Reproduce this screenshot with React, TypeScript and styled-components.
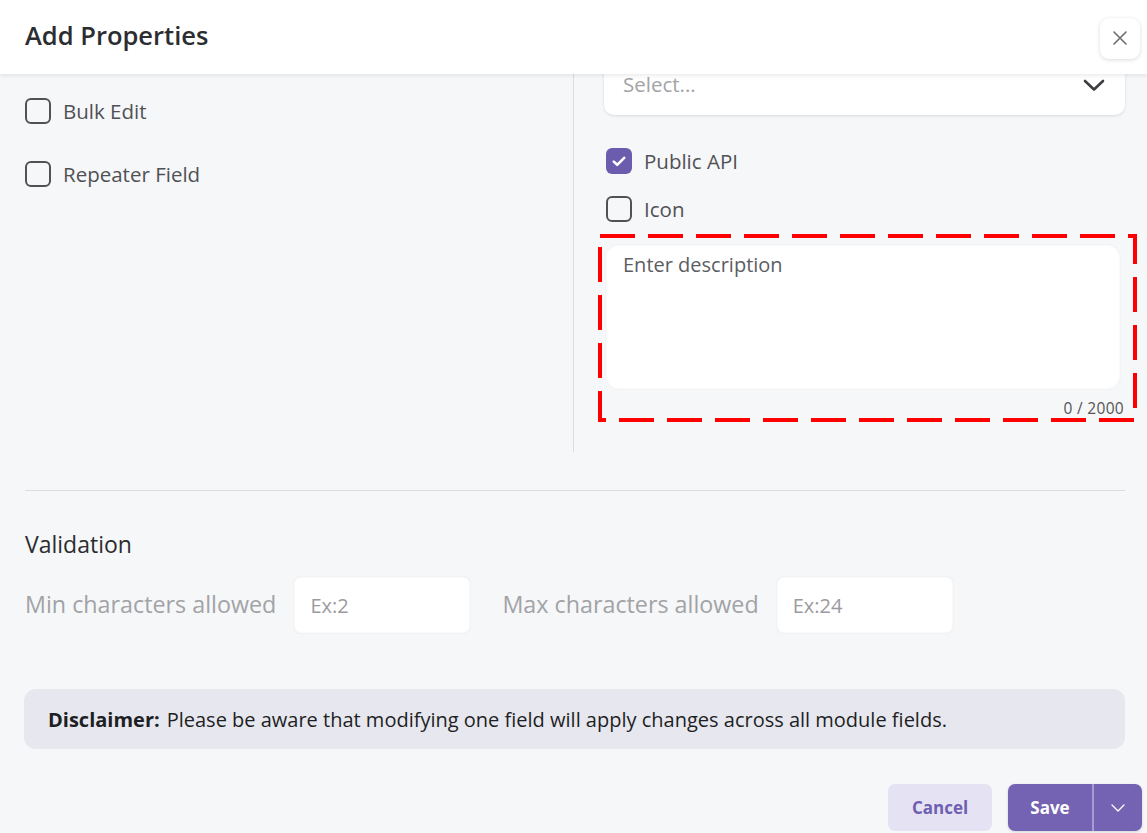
import React from "react";
import styled, { createGlobalStyle } from "styled-components";

const Global = createGlobalStyle`
  html, body { margin: 0; padding: 0; background: #f6f7f9; }
  body { font-family: "Open Sans", "Noto Sans", sans-serif; overflow: hidden; }
  * { box-sizing: border-box; }
`;

const Page = styled.div`
  width: 1147px;
  height: 833px;
  display: flex;
  flex-direction: column;
  background: #f6f7f9;
  overflow: hidden;
`;

const Header = styled.header`
  position: relative;
  z-index: 2;
  height: 74px;
  flex: none;
  background: #fff;
  box-shadow: 0 2px 4px rgba(0, 0, 0, 0.08);
  display: flex;
  align-items: center;
  justify-content: space-between;
  padding: 0 7px 4px 25px;
`;

const Title = styled.h1`
  margin: 0;
  font-size: 25.5px;
  font-weight: 600;
  color: #2b2d30;
`;

const CloseButton = styled.button`
  width: 40px;
  height: 41px;
  border: none;
  border-radius: 9px;
  background: #fff;
  box-shadow: 0 1px 4px rgba(0, 0, 0, 0.14);
  display: flex;
  align-items: center;
  justify-content: center;
  margin-top: 6px;
  padding: 0;
`;

const Body = styled.main`
  flex: 1;
  display: flex;
  flex-direction: column;
  padding: 0 22px 0 25px;
`;

const TopGrid = styled.section`
  flex: none;
  display: grid;
  grid-template-columns: 549px 1fr;
  border-bottom: 1px solid #dcdde0;
  padding-bottom: 38px;
`;

const LeftCol = styled.div`
  display: flex;
  flex-direction: column;
  gap: 37px;
  padding-top: 24px;
  border-right: 1px solid #dcdde0;
`;

const RightCol = styled.div`
  display: flex;
  flex-direction: column;
  padding-left: 30px;
  padding-bottom: 30px;
  margin-top: -19px;
  & > * { flex: none; }
`;

const SelectBox = styled.div`
  height: 60px;
  background: #fff;
  border-radius: 10px;
  box-shadow: 0 1px 3px rgba(0, 0, 0, 0.12);
  display: flex;
  align-items: center;
  justify-content: space-between;
  padding: 0 20px 0 19px;
  font-size: 20.5px;
  color: #a3a3a6;
  margin-bottom: 33px;
  span { margin-top: -2px; }
`;

const CheckRow = styled.label`
  display: flex;
  align-items: center;
  gap: 12px;
  height: 26px;
  font-size: 20.5px;
  font-weight: 500;
  color: #505154;
`;

const RightChecks = styled.div`
  display: flex;
  flex-direction: column;
  gap: 22px;
  margin-left: 2px;
`;

const Box = styled.span<{ $checked?: boolean }>`
  width: 26px;
  height: 26px;
  flex: none;
  border-radius: 6px;
  border: ${(p) => (p.$checked ? "none" : "2.5px solid #515256")};
  background: ${(p) => (p.$checked ? "#6c5cae" : "transparent")};
  display: flex;
  align-items: center;
  justify-content: center;
`;

const Highlight = styled.div`
  position: relative;
  margin: 12px -13px 0 -6px;
  padding: 10px 17px 0 7px;
  height: 188px;
  display: flex;
  flex-direction: column;
  & > * { flex: none; }
`;

const Dashes = styled.svg`
  position: absolute;
  inset: 0;
  width: 100%;
  height: 100%;
  pointer-events: none;
`;

const TextArea = styled.div`
  height: 146px;
  background: #fff;
  border-radius: 14px;
  box-shadow: inset 0 0 3px rgba(0, 0, 0, 0.12);
  padding: 7px 18px;
  font-size: 20px;
  color: #5c5d61;
`;

const Counter = styled.div`
  text-align: right;
  font-size: 15.5px;
  line-height: 20px;
  color: #555;
  margin-top: 8px;
  margin-right: -3px;
  letter-spacing: 0.3px;
`;

const SectionTitle = styled.h2`
  margin: 39px 0 0;
  font-size: 23px;
  line-height: 28px;
  font-weight: 500;
  color: #2b2c2f;
`;

const ValidationRow = styled.div`
  display: flex;
  align-items: center;
  margin-top: 18px;
`;

const FieldLabel = styled.span`
  font-size: 23.3px;
  font-weight: 500;
  color: #a2a3a6;
  margin-right: 17px;
  margin-top: -2px;
`;

const NumInput = styled.div`
  flex: none;
  width: 178px;
  height: 58px;
  background: #fff;
  border-radius: 8px;
  box-shadow: inset 0 0 3px rgba(0, 0, 0, 0.14);
  display: flex;
  align-items: center;
  padding-left: 17px;
  font-size: 20px;
  color: #9a9b9e;
  margin-right: 31px;
`;

const Disclaimer = styled.div`
  flex: none;
  margin: 55px 0 0 -1px;
  height: 60px;
  background: #e7e7f0;
  border-radius: 12px;
  display: flex;
  align-items: center;
  padding-left: 24px;
  font-size: 20px;
  color: #1e1f22;
  strong { font-weight: 700; margin-right: 7px; }
`;

const Footer = styled.footer`
  flex: none;
  display: flex;
  justify-content: flex-end;
  gap: 16px;
  margin: 35px -17px 0 0;
`;

const CancelButton = styled.button`
  width: 104px;
  height: 47px;
  border: none;
  border-radius: 7px;
  background: #e5e2f4;
  color: #6e5fb0;
  font-family: inherit;
  font-size: 17px;
  font-weight: 700;
`;

const SplitButton = styled.div`
  display: flex;
  height: 47px;
  border-radius: 7px;
  overflow: hidden;
  background: #7463b3;
  box-shadow: 0 1px 3px rgba(0, 0, 0, 0.15);
`;

const SaveButton = styled.button`
  width: 86px;
  border: none;
  background: transparent;
  color: #fff;
  font-family: inherit;
  font-size: 17px;
  font-weight: 700;
  border-right: 2px solid #a79bd6;
`;

const CaretButton = styled.button`
  width: 48px;
  border: none;
  background: transparent;
  display: flex;
  align-items: center;
  justify-content: center;
`;

const Check = ({ checked, label }: { checked?: boolean; label: string }) => (
  <CheckRow>
    <Box $checked={checked}>
      {checked && (
        <svg width="14" height="11" viewBox="0 0 14 11">
          <path d="M1.8 5.6 L5.2 8.8 L12.2 1.8" fill="none" stroke="#fff" strokeWidth="2.6" strokeLinecap="round" strokeLinejoin="round" />
        </svg>
      )}
    </Box>
    {label}
  </CheckRow>
);

export default function App() {
  return (
    <Page>
      <Global />
      <Header>
        <Title>Add Properties</Title>
        <CloseButton aria-label="Close">
          <svg width="16" height="16" viewBox="0 0 16 16">
            <path d="M2 2 L14 14 M14 2 L2 14" stroke="#6b6c70" strokeWidth="1.6" strokeLinecap="round" />
          </svg>
        </CloseButton>
      </Header>
      <Body>
        <TopGrid>
          <LeftCol>
            <Check label="Bulk Edit" />
            <Check label="Repeater Field" />
          </LeftCol>
          <RightCol>
            <SelectBox>
              <span>Select...</span>
              <svg width="22" height="13" viewBox="0 0 22 13">
                <path d="M2 2 L11 10.5 L20 2" fill="none" stroke="#3c3d41" strokeWidth="2.6" strokeLinecap="round" strokeLinejoin="round" />
              </svg>
            </SelectBox>
            <RightChecks>
              <Check checked label="Public API" />
              <Check label="Icon" />
            </RightChecks>
            <Highlight>
              <Dashes preserveAspectRatio="none">
                <rect x="2" y="2" width="535" height="184" fill="none" stroke="#ff0000" strokeWidth="4" strokeDasharray="35 13" />
              </Dashes>
              <TextArea>Enter description</TextArea>
              <Counter>0 / 2000</Counter>
            </Highlight>
          </RightCol>
        </TopGrid>
        <SectionTitle>Validation</SectionTitle>
        <ValidationRow>
          <FieldLabel>Min characters allowed</FieldLabel>
          <NumInput>Ex:2</NumInput>
          <FieldLabel>Max characters allowed</FieldLabel>
          <NumInput>Ex:24</NumInput>
        </ValidationRow>
        <Disclaimer>
          <strong>Disclaimer:</strong>
          Please be aware that modifying one field will apply changes across all module fields.
        </Disclaimer>
        <Footer>
          <CancelButton>Cancel</CancelButton>
          <SplitButton>
            <SaveButton>Save</SaveButton>
            <CaretButton aria-label="More">
              <svg width="14" height="8" viewBox="0 0 14 8">
                <path d="M1 1 L7 7 L13 1" fill="none" stroke="#fff" strokeWidth="1.3" strokeLinecap="round" strokeLinejoin="round" />
              </svg>
            </CaretButton>
          </SplitButton>
        </Footer>
      </Body>
    </Page>
  );
}
